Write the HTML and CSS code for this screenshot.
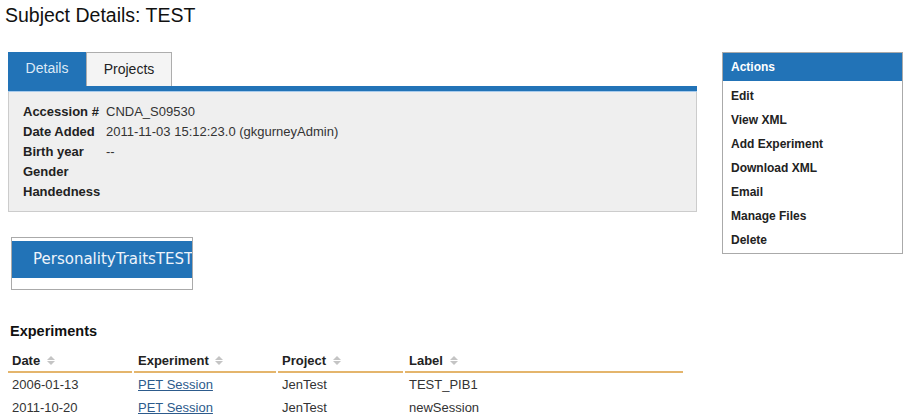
FILE: index.html
```html
<!DOCTYPE html>
<html>
<head>
<meta charset="utf-8">
<link rel="stylesheet" href="styles.css">
</head>
<body>
<h1 class="title">Subject Details: TEST</h1>
<div class="page">
  <div class="main">
    <div class="tabs">
      <div class="tab tab-active">Details</div>
      <div class="tab">Projects</div>
    </div>
    <div class="tabbar"></div>
    <div class="details">
      <table class="dtable">
        <tr><th>Accession #</th><td>CNDA_S09530</td></tr>
        <tr><th>Date Added</th><td>2011-11-03 15:12:23.0 (gkgurneyAdmin)</td></tr>
        <tr><th>Birth year</th><td>--</td></tr>
        <tr><th>Gender</th><td></td></tr>
        <tr><th>Handedness</th><td></td></tr>
      </table>
    </div>
    <div class="pbox">
      <div class="pbtn">PersonalityTraitsTEST</div>
    </div>
    <h2 class="exp-title">Experiments</h2>
    <table class="etable">
      <thead>
        <tr>
          <th class="c1">Date <span class="sort"></span></th>
          <th class="c2">Experiment <span class="sort"></span></th>
          <th class="c3">Project <span class="sort"></span></th>
          <th class="c4">Label <span class="sort"></span></th>
        </tr>
      </thead>
      <tbody>
        <tr><td>2006-01-13</td><td><a href="#">PET Session</a></td><td>JenTest</td><td>TEST_PIB1</td></tr>
        <tr><td>2011-10-20</td><td><a href="#">PET Session</a></td><td>JenTest</td><td>newSession</td></tr>
      </tbody>
    </table>
  </div>
  <div class="actions">
    <div class="act-head">Actions</div>
    <ul class="act-list">
      <li>Edit</li>
      <li>View XML</li>
      <li>Add Experiment</li>
      <li>Download XML</li>
      <li>Email</li>
      <li>Manage Files</li>
      <li>Delete</li>
    </ul>
  </div>
</div>
</body>
</html>
```

FILE: styles.css
```css
* { box-sizing: border-box; }
body {
  margin: 0;
  font-family: "Liberation Sans", Arial, sans-serif;
  color: #222;
  background: #fff;
}
.title {
  margin: 0;
  padding: 4px 0 0 5px;
  font-size: 19.5px;
  font-weight: normal;
  line-height: 22px;
  color: #111;
}
.page {
  display: flex;
  align-items: flex-start;
  padding: 0 20px 0 8px;
  margin-top: 26px;
}
.main {
  width: 689px;
}
.tabs {
  display: flex;
  height: 34px;
}
.tab {
  height: 34px;
  line-height: 33px;
  font-size: 14px;
  text-align: center;
}
.tab-active {
  width: 78px;
  background: #2273b7;
  color: #dce9f6;
}
.tab:not(.tab-active) {
  width: 86px;
  background: #f4f4f4;
  border: 1px solid #adadad;
  border-bottom: none;
  color: #222;
}
.tabbar {
  height: 6px;
  background: #2273b7;
  border-bottom: 1px solid #a8cbec;
}
.details {
  background: #efefef;
  border: 1px solid #cccccc;
  border-top: none;
  padding: 9px 14px 9px 14px;
  height: 120px;
}
.dtable {
  border-collapse: collapse;
  font-size: 13px;
}
.dtable th {
  text-align: left;
  font-weight: bold;
  width: 83px;
  padding: 0;
  height: 20px;
  color: #222;
}
.dtable td {
  padding: 0;
  color: #333;
}
.pbox {
  margin: 25px 0 0 3px;
  width: 182px;
  height: 53px;
  border: 1px solid #aaaaaa;
  padding-top: 3px;
}
.pbtn {
  height: 37px;
  background: #2273b7;
  color: #eef3fb;
  font-family: "DejaVu Sans", Verdana, sans-serif;
  font-size: 15px;
  line-height: 37px;
  padding-left: 21px;
  white-space: nowrap;
  overflow: hidden;
}
.exp-title {
  margin: 32px 0 0 2px;
  font-size: 14.5px;
  line-height: 18px;
  font-weight: bold;
  color: #111;
}
.etable {
  margin-top: 10px;
  border-collapse: separate;
  border-spacing: 2px 0;
  margin-left: -2px;
  font-size: 13px;
}
.etable th {
  text-align: left;
  font-weight: bold;
  height: 23px;
  padding: 1px 0 1px 4px;
  border-bottom: 2px solid #e4b56c;
  color: #222;
  vertical-align: middle;
}
.etable .c1 { width: 124px; }
.etable .c2 { width: 142px; }
.etable .c3 { width: 125px; }
.etable .c4 { width: 278px; }
.etable td {
  height: 23px;
  padding: 0 0 1px 4px;
  color: #333;
}
.etable a {
  color: #2d5b8c;
  text-decoration: underline;
}
.sort {
  display: inline-block;
  width: 9px;
  height: 10px;
  margin-left: 3px;
  vertical-align: -1px;
  position: relative;
}
.sort::before, .sort::after {
  content: "";
  position: absolute;
  left: 0;
  border-left: 4.5px solid transparent;
  border-right: 4.5px solid transparent;
}
.sort::before {
  top: 0;
  border-bottom: 4px solid #c4c4c4;
}
.sort::after {
  top: 5px;
  border-top: 4px solid #c4c4c4;
}
.actions {
  margin-left: 25px;
  width: 181px;
  border: 1px solid #aaaaaa;
}
.act-head {
  height: 28px;
  background: #2273b7;
  color: #fff;
  font-weight: bold;
  font-size: 12px;
  line-height: 28px;
  padding-left: 8px;
}
.act-list {
  list-style: none;
  margin: 0;
  padding: 3px 0 1px 8px;
}
.act-list li {
  height: 24px;
  line-height: 24px;
  font-size: 12px;
  font-weight: bold;
  color: #222;
}
```
